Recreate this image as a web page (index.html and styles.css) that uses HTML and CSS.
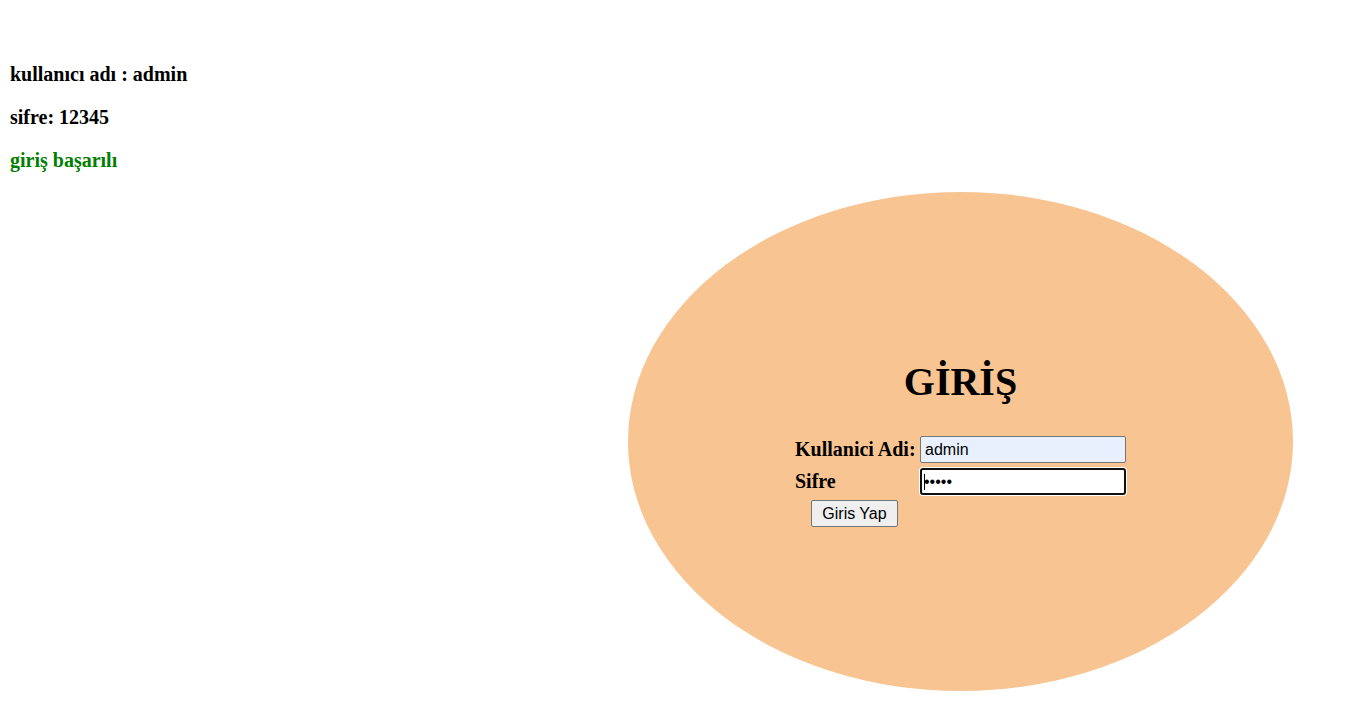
FILE: index.html
```html
<!DOCTYPE html>
<html lang="tr">
<head>
<meta charset="utf-8">
<title>Giriş</title>
<link rel="stylesheet" href="styles.css">
</head>
<body>
<div class="info">
  <h3 class="line">kullanıcı adı : admin</h3>
  <h3 class="line">sifre: 12345</h3>
  <h3 class="line ok">giriş başarılı</h3>
</div>
<div class="stage">
  <div class="circle">
    <h1 class="title">GİRİŞ</h1>
    <form class="login">
      <label class="lbl" for="u">Kullanici Adi:</label>
      <input class="field autofill" id="u" type="text" value="admin">
      <label class="lbl" for="p">Sifre</label>
      <span class="pwrap">
        <input class="field focused" id="p" type="password" value="12345">
        <span class="caret"></span>
      </span>
      <button class="btn" type="button">Giris Yap</button>
    </form>
  </div>
</div>
</body>
</html>
```

FILE: styles.css
```css
html, body {
  margin: 0;
  padding: 0;
  background: #ffffff;
}
body {
  font-family: "Liberation Serif", "Times New Roman", serif;
  color: #000;
}
.info {
  padding: 63px 10px 0;
}
.line {
  font-size: 20px;
  font-weight: bold;
  line-height: 23px;
  margin: 0 0 20px;
}
.ok {
  color: #008000;
}
.stage {
  display: flex;
  justify-content: flex-end;
  padding-right: 69px;
}
.circle {
  width: 665px;
  height: 499px;
  border-radius: 50%;
  background: #f8c491;
  display: flex;
  flex-direction: column;
  align-items: center;
  justify-content: center;
}
.title {
  font-size: 40px;
  line-height: 46px;
  font-weight: bold;
  margin: 3px 0 31px;
}
.login {
  display: grid;
  grid-template-columns: 119px 206px;
  column-gap: 6px;
  row-gap: 5px;
  align-items: center;
}
.lbl {
  font-size: 20px;
  font-weight: bold;
  white-space: nowrap;
}
.field {
  box-sizing: border-box;
  width: 206px;
  height: 27px;
  margin: 0;
  font-family: "Liberation Sans", Arial, sans-serif;
  font-size: 16px;
  padding: 1px 5px;
  border: 1px solid #767676;
  border-radius: 2px;
  background: #ffffff;
  color: #000;
  outline: none;
}
.autofill {
  background: #e8f0fe;
  padding-left: 4px;
}
.focused {
  border: 2px solid #101010;
  border-radius: 3px;
  padding: 1px 2px;
  box-shadow: 0 0 0 1px #ffffff;
}
.pwrap {
  position: relative;
  display: block;
  width: 206px;
  height: 27px;
}
.caret {
  position: absolute;
  left: 4px;
  top: 6px;
  width: 1px;
  height: 16px;
  background: #000;
}
.btn {
  justify-self: center;
  box-sizing: border-box;
  height: 27px;
  padding: 0 10px;
  font-family: "Liberation Sans", Arial, sans-serif;
  font-size: 16px;
  background: #efefef;
  border: 1px solid #767676;
  border-radius: 2px;
  color: #000;
}
```
